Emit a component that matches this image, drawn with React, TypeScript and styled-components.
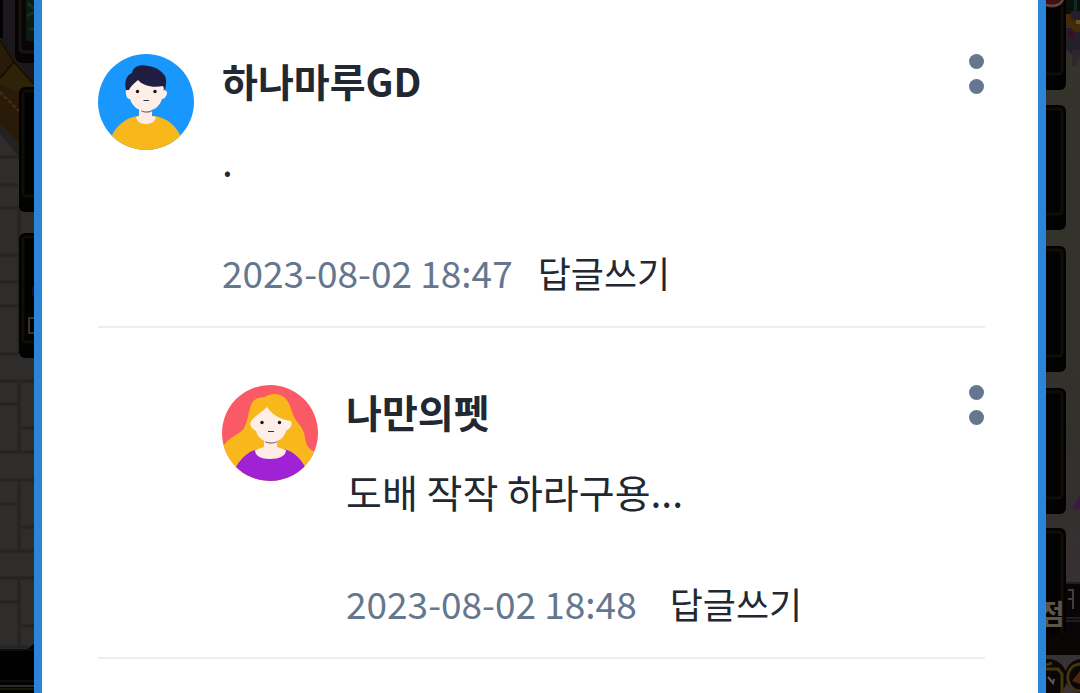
import React from "react";
import styled, { createGlobalStyle } from "styled-components";

const GlobalStyle = createGlobalStyle`
  * { box-sizing: border-box; }
  body {
    margin: 0;
    background: #000;
    color: #212832;
    font-family: "Noto Sans CJK KR", "Noto Sans", sans-serif;
  }
`;

const Page = styled.div`
  display: flex;
  min-height: 100vh;
`;

const Scene = styled.svg`
  flex: none;
  width: 34px;
  height: 693px;
  display: block;
`;

const Panel = styled.main`
  flex: 1;
  min-width: 0;
  padding: 0 53px 0 56px;
  background: #fff;
  border: solid #2b84d8;
  border-width: 0 8px;
`;

const CommentList = styled.ul`
  list-style: none;
  margin: 0;
  padding: 0;
`;

const CommentItem = styled.li<{ $reply?: boolean }>`
  display: flex;
  align-items: flex-start;
  gap: 28px;
  padding: 57px 0 27px ${(p) => (p.$reply ? 124 : 0)}px;
  border-bottom: 2px solid #edeef2;

  &:first-child {
    padding-top: 54px;
  }
`;

const Avatar = styled.svg`
  flex: none;
  width: 96px;
  height: 96px;
`;

const Content = styled.div`
  flex: 1;
  min-width: 0;
`;

const Author = styled.h2`
  margin: 0 0 26px;
  font-size: 39px;
  line-height: 52px;
  font-weight: 700;
`;

const Message = styled.p`
  margin: 0 0 57px;
  font-size: 39px;
  line-height: 56px;
`;

const Meta = styled.footer<{ $gap: number }>`
  display: flex;
  align-items: center;
  gap: ${(p) => p.$gap}px;
  line-height: 52px;
`;

const Time = styled.time`
  color: #64778f;
  font-size: 37px;
`;

const ReplyButton = styled.button`
  border: 0;
  padding: 0;
  background: none;
  color: inherit;
  font: inherit;
  font-size: 36px;
  line-height: 54px;
  cursor: pointer;
`;

const MoreButton = styled.button`
  display: flex;
  flex-direction: column;
  gap: 10px;
  padding: 0 1px 0 0;
  border: 0;
  background: none;
  cursor: pointer;
`;

const Dot = styled.span`
  width: 15px;
  height: 15px;
  border-radius: 50%;
  background: #64778f;
`;

function BoyAvatar() {
  return (
    <Avatar viewBox="0 0 96 96" role="img" aria-label="프로필">
      <defs>
        <clipPath id="boy-clip"><circle cx="48" cy="48" r="48" /></clipPath>
      </defs>
      <g clipPath="url(#boy-clip)">
        <rect width="96" height="96" fill="#1a97fd" />
        <path d="M13 83C19 70 29 64 39 62H57C68 64 78 71 83 83V96H13Z" fill="#f8b81b" />
        <path d="M41 53H54V62L58 63C57 68 53 70 48 70S39 68 38 63L41 62Z" fill="#feece4" />
        <path d="M43 56C46 58 51 58 54 56V57C51 59 47 59 43 57Z" fill="#5a4d55" />
        <path d="M31 35L40 25H62L66 34L65 36C69 36 70 39 68 42C67 44 66 45 64 45C62 52 56 57 48 57S34 52 32 45C30 45 28 43 28 40C27 37 29 35 31 35Z" fill="#feeee8" />
        <path d="M28 36C26 29 28 21 34 19C35 12 43 10 50 12C58 13 64 17 67 22C69 26 68 31 67 36L65 32C55 34 45 32 40 26C38 28 33 31 31 36Z" fill="#201d43" />
        <circle cx="39.5" cy="37.5" r="1.7" fill="#16131c" />
        <circle cx="57" cy="37.5" r="1.7" fill="#16131c" />
        <path d="M45.5 46.5H51" stroke="#3b3036" strokeWidth="1.2" />
      </g>
    </Avatar>
  );
}

function GirlAvatar() {
  return (
    <Avatar viewBox="0 0 96 96" role="img" aria-label="프로필">
      <defs>
        <clipPath id="girl-clip"><circle cx="48" cy="48" r="48" /></clipPath>
      </defs>
      <g clipPath="url(#girl-clip)">
        <rect width="96" height="96" fill="#f95a66" />
        <path d="M0 66C3 52 17 51 22 43C26 36 26 28 29 20C32 13 38 12 43 12C48 8 58 8 63 13C70 20 69 30 76 38C85 48 82 55 85 60C88 65 91 66 94 67L82 96H12Z" fill="#f8b81b" />
        <path d="M14 82C21 70 29 66 36 64H62C70 66 78 72 83 82V96H14Z" fill="#a022d5" />
        <path d="M42 54H55V62L64 65C64 71 57 74 48 74S33 71 33 65L42 62Z" fill="#feece4" />
        <path d="M43 56C47 58 52 58 55 56V57C51 59 47 59 43 57Z" fill="#5a4d55" />
        <path d="M45 22C39 28 33 31 30 35C26 40 30 44 34 46C36 53 41 57 49 57S62 53 64 46C68 44 71 40 69 36C60 35 50 30 45 22Z" fill="#feeee8" />
        <circle cx="40" cy="37.5" r="1.7" fill="#16131c" />
        <circle cx="57.5" cy="37.5" r="1.7" fill="#16131c" />
        <path d="M46 46.5H52" stroke="#3b3036" strokeWidth="1.2" />
      </g>
    </Avatar>
  );
}

function Slot({ x, y, width = 47, height = 125 }: { x: number; y: number; width?: number; height?: number }) {
  return (
    <g>
      <rect x={x} y={y} width={width} height={height} rx="6" fill="#030202" />
      <rect x={x + 4} y={y + 4} width={width - 8} height={height - 20} rx="3" fill="none" stroke="#100c06" strokeWidth="3" />
    </g>
  );
}

function LeftScene() {
  return (
    <Scene viewBox="0 0 34 693" aria-hidden="true">
      <rect width="34" height="693" fill="#2e2d2c" />
      <path
        d="M0 157H19M0 185H18M0 208H34M0 255H18M0 282H18M0 306H18M0 354H18M0 381H34M0 404H19M21 428H34M0 452H34M0 480H34M0 504H19M21 527H34M0 551H34M0 578H34M0 602H19M21 626H34M0 647H34M19 208V354M19 381V452M19 480V551M19 578V647"
        stroke="#252422"
        strokeWidth="3"
        fill="none"
      />
      <path d="M0 0H34V90L18 150L0 125Z" fill="#1c171d" />
      <path d="M0 0H3V38H0Z" fill="#030203" />
      <path d="M0 40L34 82V92H19V145L0 127Z" fill="#2a1a08" />
      <path d="M0 78L14 62L34 84V92H18L0 84Z" fill="#2e2209" />
      <path d="M0 40L14 62L0 78M14 62L34 84" stroke="#170f09" strokeWidth="2" fill="none" />
      <path d="M0 92L19 111" stroke="#403317" strokeWidth="2" strokeDasharray="4 2" />
      <path d="M0 124L19 143V157L0 134Z" fill="#232222" />
      <rect x="15" y="-20" width="40" height="83" rx="7" fill="#050304" />
      <rect x="20" y="-20" width="40" height="72" rx="4" fill="#090607" stroke="#1c1412" strokeWidth="3" />
      <rect x="26" width="8" height="41" fill="#0c1c14" />
      <path d="M28 3L34 9M27 16L34 12M29 29H34" stroke="#12321f" strokeWidth="3" />
      <Slot x={19} y={87} />
      <Slot x={19} y={233} />
      <rect x="32" y="287" width="2" height="9" fill="#1b0b2b" />
      <path d="M34 318H29V333H34" stroke="#39332c" strokeWidth="2" fill="none" />
      <path d="M34 644L28 649H0V693H34Z" fill="#010101" />
      <path d="M0 650H34M0 681H34" stroke="#1b1a1b" />
      <path d="M0 686H34" stroke="#302b2a" strokeWidth="2" />
      <path d="M0 689H34" stroke="#1c1408" strokeWidth="2" />
    </Scene>
  );
}

function RightScene() {
  return (
    <Scene viewBox="0 0 34 693" aria-hidden="true">
      <defs>
        <linearGradient id="ground" x1="0" y1="0" x2="0" y2="1">
          <stop offset="0" stopColor="#34342d" />
          <stop offset="0.6" stopColor="#32312b" />
          <stop offset="0.8" stopColor="#352f31" />
          <stop offset="1" stopColor="#3a3333" />
        </linearGradient>
      </defs>
      <rect width="34" height="693" fill="url(#ground)" />
      <path d="M20 0H34V60L20 50Z" fill="#241f2b" />
      <path d="M20 0H34V11H25V16H20Z" fill="#0b100d" />
      <path d="M28 0H31V11H28Z" fill="#0c2d27" />
      <path d="M20 14H25V20H34V32H26V28H20Z" fill="#422b0d" />
      <path d="M30 20H34V24H30Z" fill="#685024" />
      <path d="M23 31H28V38H23Z" fill="#3b1010" />
      <path d="M26 50H34V60H31V66H26Z" fill="#302630" />
      <Slot x={-27} y={-35} />
      <path d="M0 0H18C15 8 7 9 0 7Z" fill="#421010" />
      <path d="M0 5C8 7 14 5 17 0" stroke="#5e5151" strokeWidth="2" fill="none" />
      <Slot x={-27} y={105} />
      <Slot x={-27} y={246} height={126} />
      <Slot x={-27} y={388} height={126} />
      <path d="M26 508L34 496V509L30 510Z" fill="#3a1c42" />
      <path d="M20 582H34V655H0V640H20Z" fill="#070506" />
      <path d="M20 583H34M20 618H34M20 621H34" stroke="#39363a" />
      <path d="M22 590H27V609M22 599H27" stroke="#403d42" strokeWidth="2" fill="none" />
      <Slot x={-27} y={528} />
      <path d="M0 633H34V655H0Z" fill="#080503" />
      <text x="-7" y="625" fill="#5a5544" fontSize="28" fontWeight="700" fontFamily="Noto Sans CJK KR, sans-serif">점</text>
      <circle cx="2" cy="678" r="19" fill="#0a0706" />
      <circle cx="36" cy="676" r="17" fill="#0a0706" />
      <path d="M0 669H12L16 674V693M0 665L6 663" stroke="#43350f" strokeWidth="3" fill="none" />
      <path d="M2 677L7 683L8 679" stroke="#5f5a51" strokeWidth="2" fill="none" />
      <path d="M34 664C24 665 21 673 22 680C24 689 29 691 34 691" stroke="#45340f" strokeWidth="3" fill="none" />
      <path d="M26 681L34 671V684Z" fill="#4b2510" />
    </Scene>
  );
}

interface CommentData {
  author: string;
  message: string;
  date: string;
  reply?: boolean;
  picture: React.ReactNode;
}

const comments: CommentData[] = [
  { author: "하나마루GD", message: ".", date: "2023-08-02 18:47", picture: <BoyAvatar /> },
  { author: "나만의펫", message: "도배 작작 하라구용...", date: "2023-08-02 18:48", reply: true, picture: <GirlAvatar /> },
];

function Comment({ author, message, date, reply, picture }: CommentData) {
  return (
    <CommentItem $reply={reply}>
      {picture}
      <Content>
        <Author>{author}</Author>
        <Message>{message}</Message>
        <Meta $gap={reply ? 33 : 25}>
          <Time dateTime={date}>{date}</Time>
          <ReplyButton type="button">답글쓰기</ReplyButton>
        </Meta>
      </Content>
      <MoreButton type="button" aria-label="더보기">
        <Dot />
        <Dot />
      </MoreButton>
    </CommentItem>
  );
}

export default function App() {
  return (
    <>
      <GlobalStyle />
      <Page>
        <LeftScene />
        <Panel>
          <CommentList>
            {comments.map((c) => (
              <Comment key={c.date} {...c} />
            ))}
          </CommentList>
        </Panel>
        <RightScene />
      </Page>
    </>
  );
}
